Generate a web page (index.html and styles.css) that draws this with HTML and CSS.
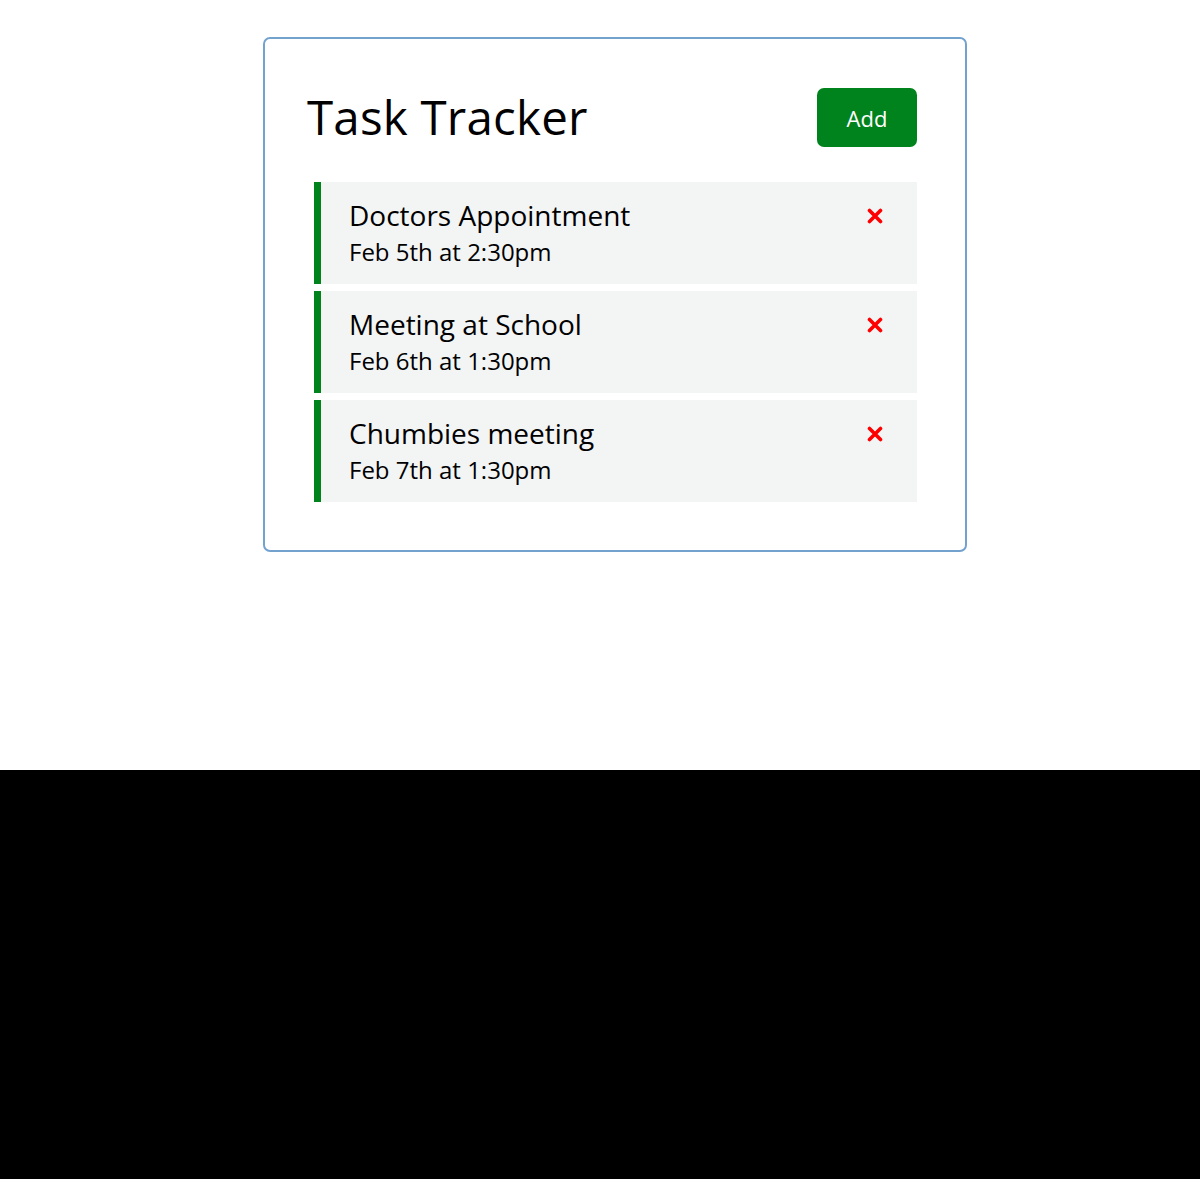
FILE: index.html
```html
<!DOCTYPE html>
<html lang="en">
<head>
<meta charset="utf-8">
<title>Task Tracker</title>
<link rel="stylesheet" href="styles.css">
</head>
<body>
<div class="page">
  <div class="container">
    <header class="header">
      <h1 class="title">Task Tracker</h1>
      <button class="btn">Add</button>
    </header>
    <div class="tasks">
      <div class="task">
        <h3 class="task-title">Doctors Appointment
          <svg class="del" viewBox="0 0 16 16" width="16" height="16"><path d="M2.5 2.5 L13.5 13.5 M13.5 2.5 L2.5 13.5" stroke="#ff0000" stroke-width="3.6" stroke-linecap="round"/></svg>
        </h3>
        <p class="task-day">Feb 5th at 2:30pm</p>
      </div>
      <div class="task">
        <h3 class="task-title">Meeting at School
          <svg class="del" viewBox="0 0 16 16" width="16" height="16"><path d="M2.5 2.5 L13.5 13.5 M13.5 2.5 L2.5 13.5" stroke="#ff0000" stroke-width="3.6" stroke-linecap="round"/></svg>
        </h3>
        <p class="task-day">Feb 6th at 1:30pm</p>
      </div>
      <div class="task">
        <h3 class="task-title">Chumbies meeting
          <svg class="del" viewBox="0 0 16 16" width="16" height="16"><path d="M2.5 2.5 L13.5 13.5 M13.5 2.5 L2.5 13.5" stroke="#ff0000" stroke-width="3.6" stroke-linecap="round"/></svg>
        </h3>
        <p class="task-day">Feb 7th at 1:30pm</p>
      </div>
    </div>
  </div>
</div>
</body>
</html>
```

FILE: styles.css
```css
* {
  box-sizing: border-box;
  margin: 0;
  padding: 0;
}

html, body {
  background: #000;
}

body {
  margin: 0;
  font-family: "Open Sans", "DejaVu Sans", sans-serif;
  color: #000;
}

.page {
  height: 770px;
  background: #fff;
  padding-top: 37px;
}

.container {
  width: 704px;
  height: 515px;
  margin-left: 263px;
  border: 2px solid #74a2cf;
  border-radius: 7px;
  padding: 41px 42px;
}

.header {
  display: flex;
  justify-content: space-between;
  align-items: center;
  margin-bottom: 29px;
}

.title {
  font-size: 47.5px;
  font-weight: 500;
  line-height: 67px;
  letter-spacing: 0.2px;
}

.btn {
  margin: 8px 6px 6px 7px;
  width: 100px;
  height: 59px;
  background: #00821c;
  color: #fff;
  border: none;
  border-radius: 7px;
  font-family: inherit;
  font-size: 22px;
  font-weight: 500;
}

.tasks {
  display: flex;
  flex-direction: column;
  gap: 7px;
  padding: 0 6px 0 7px;
}

.task {
  background: #f3f4f4;
  padding: 14px 28px;
  border-left: 7px solid #00821c;
  height: 102px;
}

.task-title {
  display: flex;
  justify-content: space-between;
  align-items: center;
  font-size: 28px;
  font-weight: 500;
  line-height: 39px;
}

.del {
  margin-right: 6px;
  flex-shrink: 0;
}

.task-day {
  font-size: 24px;
  line-height: 34px;
}
```
